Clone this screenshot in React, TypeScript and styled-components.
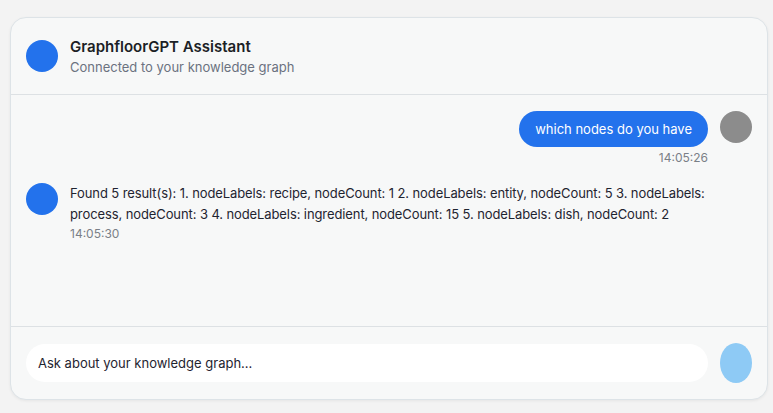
import React from "react";
import styled, { createGlobalStyle } from "styled-components";

const GlobalStyle = createGlobalStyle`
  html, body {
    margin: 0;
    padding: 0;
    background: #f3f3f3;
    font-family: Inter, "Noto Sans", sans-serif;
  }
  * {
    box-sizing: border-box;
  }
`;

const Page = styled.div`
  width: 773px;
  height: 413px;
  padding: 17px 5px 0 10px;
`;

const Card = styled.div`
  height: 383px;
  display: flex;
  flex-direction: column;
  background: #f7f8f8;
  border: 1px solid #dde3e7;
  border-radius: 16px;
  box-shadow: 0 1px 3px rgba(0, 0, 0, 0.06);
  overflow: hidden;
`;

const Header = styled.div`
  display: flex;
  align-items: center;
  gap: 12px;
  padding: 16px 15px;
  border-bottom: 1px solid #dde1e4;
`;

const Avatar = styled.div<{ $color: string }>`
  width: 32px;
  height: 32px;
  flex-shrink: 0;
  border-radius: 50%;
  background: ${(p) => p.$color};
`;

const HeaderText = styled.div`
  display: flex;
  flex-direction: column;
  padding-top: 2px;
`;

const Title = styled.div`
  font-size: 15px;
  line-height: 21px;
  font-weight: 600;
  color: #1c1f26;
`;

const Subtitle = styled.div`
  font-size: 13px;
  line-height: 21px;
  color: #6b7280;
`;

const Messages = styled.div`
  flex: 1;
  padding: 16px 15px;
  display: flex;
  flex-direction: column;
  gap: 18px;
`;

const Row = styled.div<{ $mine?: boolean }>`
  display: flex;
  gap: 12px;
  align-items: flex-start;
  flex-direction: ${(p) => (p.$mine ? "row-reverse" : "row")};
`;

const Content = styled.div<{ $mine?: boolean }>`
  display: flex;
  flex-direction: column;
  align-items: ${(p) => (p.$mine ? "flex-end" : "flex-start")};
  max-width: 660px;
`;

const Bubble = styled.div`
  background: #2372ec;
  color: #ffffff;
  font-size: 13px;
  line-height: 18px;
  padding: 9px 16px;
  border-radius: 18px;
`;

const BotText = styled.div`
  font-size: 13px;
  line-height: 21px;
  letter-spacing: -0.1px;
  color: #1f2430;
`;

const Time = styled.div<{ $mine?: boolean }>`
  margin-top: ${(p) => (p.$mine ? "4px" : "2px")};
  font-size: 12px;
  line-height: 14px;
  color: #7a7f87;
`;

const InputBar = styled.div`
  display: flex;
  align-items: center;
  gap: 12px;
  padding: 16px 15px;
  border-top: 1px solid #dde1e4;
`;

const Input = styled.input`
  flex: 1;
  height: 38px;
  border: none;
  outline: none;
  border-radius: 19px;
  background: #ffffff;
  padding: 0 12px;
  font-family: inherit;
  font-size: 13px;
  color: #1f2430;
  &::placeholder {
    color: #1f2430;
  }
`;

const SendButton = styled.button`
  width: 32px;
  height: 40px;
  border: none;
  border-radius: 50%;
  background: #8ecaf5;
  padding: 0;
`;

export default function App() {
  return (
    <>
      <GlobalStyle />
      <Page>
        <Card>
          <Header>
            <Avatar $color="#2372ec" />
            <HeaderText>
              <Title>GraphfloorGPT Assistant</Title>
              <Subtitle>Connected to your knowledge graph</Subtitle>
            </HeaderText>
          </Header>
          <Messages>
            <Row $mine>
              <Avatar $color="#8c8c8c" />
              <Content $mine>
                <Bubble>which nodes do you have</Bubble>
                <Time $mine>14:05:26</Time>
              </Content>
            </Row>
            <Row>
              <Avatar $color="#2372ec" />
              <Content>
                <BotText>
                  Found 5 result(s): 1. nodeLabels: recipe, nodeCount: 1 2.
                  nodeLabels: entity, nodeCount: 5 3. nodeLabels: process,
                  nodeCount: 3 4. nodeLabels: ingredient, nodeCount: 15 5.
                  nodeLabels: dish, nodeCount: 2
                </BotText>
                <Time>14:05:30</Time>
              </Content>
            </Row>
          </Messages>
          <InputBar>
            <Input placeholder="Ask about your knowledge graph..." />
            <SendButton />
          </InputBar>
        </Card>
      </Page>
    </>
  );
}
